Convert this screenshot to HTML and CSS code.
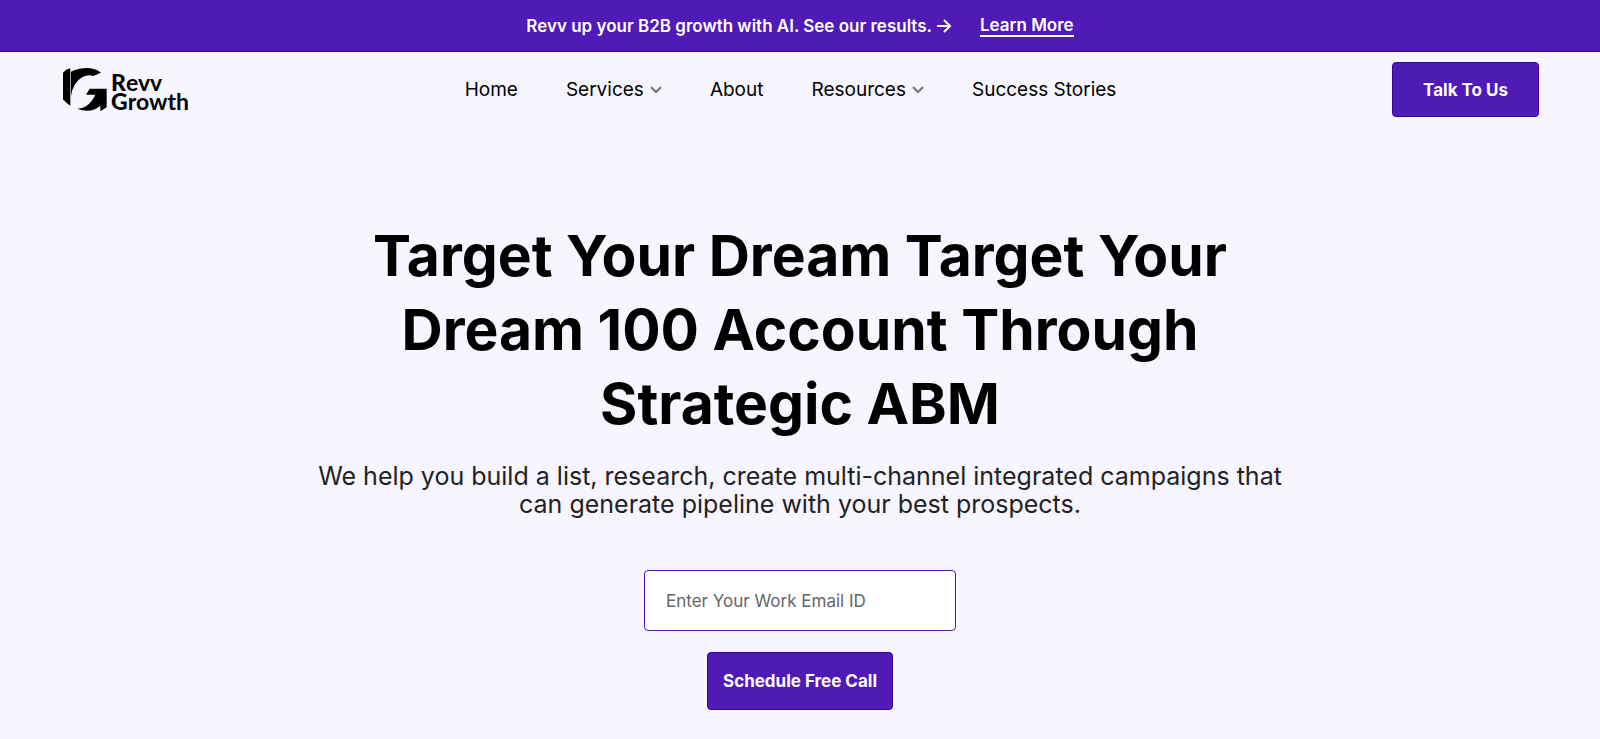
FILE: index.html
```html
<!DOCTYPE html>
<html lang="en">
<head>
<meta charset="utf-8">
<meta name="viewport" content="width=device-width, initial-scale=1">
<title>Revv Growth</title>
<link rel="stylesheet" href="styles.css">
</head>
<body>
<div class="banner">
  <p class="banner-text">Revv up your B2B growth with AI. See our results.
    <svg class="banner-arrow" width="16" height="16" viewBox="0 0 16 16" aria-hidden="true"><path d="M1 8h13M8 2l6 6-6 6"/></svg>
  </p>
  <a class="banner-link" href="#">Learn More</a>
</div>
<header class="header">
  <a class="logo" href="#" aria-label="Revv Growth">
    <svg width="44" height="44" viewBox="0 0 132 132" aria-hidden="true">
      <path d="M0 14Q8 4 22 1V113Q10 106 0 94Z"/>
      <path d="M24 11Q46 0 72 0Q96 0 114 14L91 24Q76 18 60 26Q30 42 24 84Z"/>
      <path d="M80 62H131V118L112 130V113Q84 138 42 122Q78 121 97 80H69Z"/>
    </svg>
    <span class="logo-text"><span><b>R</b>evv</span><span><b>G</b>rowth</span></span>
  </a>
  <nav class="nav">
    <a href="#">Home</a>
    <a href="#">Services <svg class="chevron" width="12" height="8" viewBox="0 0 12 8" aria-hidden="true"><path d="M1 1l5 5 5-5"/></svg></a>
    <a href="#">About</a>
    <a href="#">Resources <svg class="chevron" width="12" height="8" viewBox="0 0 12 8" aria-hidden="true"><path d="M1 1l5 5 5-5"/></svg></a>
    <a href="#">Success Stories</a>
  </nav>
  <button class="button" type="button">Talk To Us</button>
</header>
<main class="hero">
  <h1 class="title">Target Your Dream Target Your Dream 100 Account Through Strategic ABM</h1>
  <p class="lead">We help you build a list, research, create multi-channel integrated campaigns that can generate pipeline with your best prospects.</p>
  <form class="form">
    <input class="email" type="email" placeholder="Enter Your Work Email ID" aria-label="Work email">
    <button class="button button-submit" type="button">Schedule Free Call</button>
  </form>
</main>
</body>
</html>
```

FILE: styles.css
```css
* { box-sizing: border-box; }
body {
  margin: 0;
  background: #f7f5ff;
  color: #000;
  font-family: Inter, "Liberation Sans", sans-serif;
}
a { color: inherit; text-decoration: none; }
.banner {
  display: flex;
  justify-content: center;
  align-items: center;
  gap: 28px;
  height: 52px;
  background: #4f1ab5;
  border-bottom: 1px solid #3a00a4;
  color: #fff;
  font-size: 17px;
  font-weight: 600;
  line-height: 20px;
}
.banner-text { display: flex; align-items: center; gap: 4px; margin: 0; }
.banner-arrow { fill: none; stroke: #fff; stroke-width: 2; }
.banner-link { border-bottom: 2px solid #fff; }
.header {
  display: flex;
  justify-content: space-between;
  align-items: center;
  padding: 10px 61px 0 63px;
}
.logo { display: flex; align-items: center; gap: 4px; }
.logo-text {
  display: flex;
  flex-direction: column;
  padding-top: 5px;
  font-family: Lato, sans-serif;
  font-size: 23px;
  font-weight: 700;
  line-height: 19px;
}
.logo-text b { font-weight: 900; }
.nav { display: flex; gap: 48px; font-size: 19px; line-height: 24px; }
.nav a { display: flex; align-items: center; gap: 6px; }
.chevron { fill: none; stroke: #777; stroke-width: 2; }
.button {
  height: 55px;
  padding: 0 30px;
  border: 1px solid #3a00a4;
  border-radius: 4px;
  background: #4f1ab5;
  color: #fff;
  font: 700 17px/22px Inter, "Liberation Sans", sans-serif;
}
.hero {
  display: flex;
  flex-direction: column;
  align-items: center;
  padding: 102px 24px 29px;
  text-align: center;
}
.title { max-width: 900px; margin: 0; font-size: 57px; font-weight: 700; line-height: 74px; }
.lead { max-width: 1000px; margin: 21px 0 0; color: #222; font-size: 25px; line-height: 28px; }
.form { display: flex; flex-direction: column; align-items: center; gap: 21px; margin-top: 52px; }
.email {
  width: 312px;
  height: 61px;
  padding: 0 21px;
  border: 1px solid #4f1ab5;
  border-radius: 4px;
  background: #fff;
  font: 400 17px/22px Inter, "Liberation Sans", sans-serif;
}
.email::placeholder { color: #666; }
.button-submit { height: 58px; padding: 0 15px; }
```
